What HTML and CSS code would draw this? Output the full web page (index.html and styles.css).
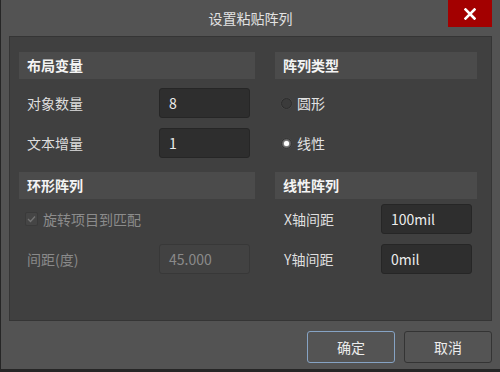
FILE: index.html
```html
<!DOCTYPE html>
<html lang="zh">
<head>
<meta charset="utf-8">
<title>设置粘贴阵列</title>
<link rel="stylesheet" href="styles.css">
</head>
<body>
<div class="window">
  <div class="titlebar">
    <div class="spacer"></div>
    <div class="title">设置粘贴阵列</div>
    <button class="close" aria-label="关闭">
      <svg width="12" height="12" viewBox="0 0 12 12"><path d="M1.5 1.5L10.5 10.5M10.5 1.5L1.5 10.5" stroke="#fff" stroke-width="2.6" stroke-linecap="square"/></svg>
    </button>
  </div>
  <div class="panel">
    <div class="col col-left">
      <div class="sec-head">布局变量</div>
      <div class="row first">
        <span class="label">对象数量</span>
        <div class="input">8</div>
      </div>
      <div class="row">
        <span class="label">文本增量</span>
        <div class="input">1</div>
      </div>
      <div class="sec-head second">环形阵列</div>
      <div class="row first2">
        <span class="check disabled"><span class="box"><svg width="9" height="8" viewBox="0 0 9 8"><path d="M1 4L3.5 6.5L8 1.5" fill="none" stroke="#747474" stroke-width="1.3"/></svg></span>旋转项目到匹配</span>
      </div>
      <div class="row">
        <span class="label disabled">间距(度)</span>
        <div class="input disabled">45.000</div>
      </div>
    </div>
    <div class="col col-right">
      <div class="sec-head">阵列类型</div>
      <div class="row first">
        <span class="radio"><span class="dot"></span>圆形</span>
      </div>
      <div class="row">
        <span class="radio on"><span class="dot"></span>线性</span>
      </div>
      <div class="sec-head second">线性阵列</div>
      <div class="row first2">
        <span class="label">X轴间距</span>
        <div class="input">100mil</div>
      </div>
      <div class="row">
        <span class="label">Y轴间距</span>
        <div class="input">0mil</div>
      </div>
    </div>
  </div>
  <div class="footer">
    <button class="btn primary">确定</button>
    <button class="btn">取消</button>
  </div>
</div>
</body>
</html>
```

FILE: styles.css
```css
* { box-sizing: border-box; }
html, body { margin: 0; padding: 0; }
body {
  width: 500px;
  height: 372px;
  background: #262626;
  font-family: "Noto Sans CJK SC", "Noto Sans", sans-serif;
  font-size: 14px;
  color: #e4e4e4;
  overflow: hidden;
}
.window {
  width: 500px;
  height: 369px;
  margin-left: 1px;
  background: #535353;
  display: flex;
  flex-direction: column;
}
.titlebar {
  height: 36px;
  display: grid;
  grid-template-columns: 1fr auto 1fr;
  align-items: start;
}
.title {
  color: #e2e2e2;
  font-size: 14px;
  line-height: 20px;
  margin-top: 8px;
  margin-left: -1px;
}
.close {
  justify-self: end;
  margin-right: 9px;
  width: 44px;
  height: 27px;
  border: none;
  padding: 0;
  background: #a30000;
  display: flex;
  align-items: center;
  justify-content: center;
}
.panel {
  margin: 0 9px 0 8px;
  height: 285px;
  background: #404040;
  border: 1px solid #353535;
  display: flex;
  column-gap: 20px;
  padding: 15px 13px 0 9px;
}
.col { display: flex; flex-direction: column; }
.col-left { width: 236px; }
.col-right { width: 202px; }
.sec-head {
  height: 27px;
  background: #4b4b4b;
  color: #f4f4f4;
  font-weight: bold;
  font-size: 14px;
  line-height: 27px;
  padding-left: 8px;
}
.sec-head.second { margin-top: 14px; }
.row {
  height: 30px;
  margin-top: 10px;
  display: flex;
  align-items: center;
  justify-content: space-between;
  padding-left: 8px;
  padding-right: 5px;
}
.row.first { margin-top: 9px; }
.row.first2 { margin-top: 5px; }
.label { line-height: 20px; color: #dedede; }
.label.disabled { color: #8a8a8a; }
.input {
  flex: 0 0 91px;
  width: 91px;
  height: 30px;
  background: #2e2e2e;
  border: 1px solid #262626;
  border-radius: 3px;
  padding-left: 9px;
  line-height: 28px;
  color: #ececec;
  font-size: 14px;
}
.input.disabled {
  background: #424242;
  border-color: #383838;
  color: #8a8a8a;
}
.check {
  display: flex;
  align-items: center;
  gap: 5px;
  margin-left: -2px;
  color: #8c8c8c;
}
.box {
  flex: 0 0 13px;
  width: 13px;
  height: 14px;
  background: #454545;
  border: 1px solid #3a3a3a;
  border-radius: 2px;
  display: flex;
  align-items: center;
  justify-content: center;
}
.col-right .row { padding-left: 6px; }
.col-right .row.first2, .col-right .row:last-child { padding-left: 9px; }
.radio {
  display: flex;
  align-items: center;
  gap: 5px;
  color: #e2e2e2;
}
.dot {
  flex: 0 0 11px;
  width: 11px;
  height: 11px;
  border-radius: 50%;
  background: #3b3b3b;
  border: 1px solid #2c2c2c;
  box-shadow: 0 0 1px #555;
  display: flex;
  align-items: center;
  justify-content: center;
}
.radio.on .dot { background: #5c5c5c; border-color: #333; }
.radio.on .dot::after {
  content: "";
  width: 5px;
  height: 5px;
  border-radius: 50%;
  background: #ffffff;
  box-shadow: 0 0 2px #fff;
}
.footer {
  display: flex;
  justify-content: flex-end;
  gap: 9px;
  padding: 10px 9px 0 0;
}
.btn {
  width: 88px;
  height: 32px;
  background: #545454;
  border: 1px solid #343434;
  border-radius: 3px;
  color: #ececec;
  font-family: "Noto Sans CJK SC", "Noto Sans", sans-serif;
  font-size: 14px;
  padding: 0;
}
.btn.primary { border-color: #86a3c4; }
```
